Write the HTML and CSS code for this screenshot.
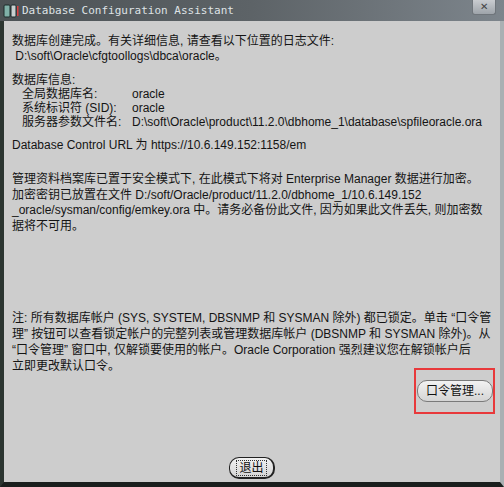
FILE: index.html
```html
<!DOCTYPE html>
<html>
<head>
    <title>Database Configuration Assistant</title>
    <link rel="stylesheet" href="styles.css">
</head>
<body>
    <div class="window">
        <div class="title-bar">
            <span class="app-icon">
                <svg width="16" height="16" viewBox="0 0 16 16">
                    <rect x="1" y="2" width="6" height="12" rx="1" fill="#7fb0a8" stroke="#1d2b2a"/>
                    <rect x="8" y="2" width="5" height="12" rx="1" fill="#c8d0d0" stroke="#1d2b2a"/>
                    <rect x="14" y="3" width="1.5" height="10" fill="#d94040"/>
                </svg>
            </span>
            <span class="title">Database Configuration Assistant</span>
            <span class="close">&#x2715;</span>
        </div>
        <div class="content">
            <div class="block block-a">
                <div>数据库创建完成。有关详细信息, 请查看以下位置的日志文件:</div>
                <div>&nbsp;D:\soft\Oracle\cfgtoollogs\dbca\oracle。</div>
            </div>
            <div class="block block-b">
                <div>数据库信息:</div>
                <div class="info-row"><span class="label">全局数据库名:</span><span>oracle</span></div>
                <div class="info-row"><span class="label">系统标识符 (SID):</span><span>oracle</span></div>
                <div class="info-row"><span class="label">服务器参数文件名:</span><span>D:\soft\Oracle\product\11.2.0\dbhome_1\database\spfileoracle.ora</span></div>
            </div>
            <div class="block block-c">
                <div>Database Control URL 为 https://10.6.149.152:1158/em</div>
            </div>
            <div class="block block-d">
                <div>管理资料档案库已置于安全模式下, 在此模式下将对 Enterprise Manager 数据进行加密。</div>
                <div>加密密钥已放置在文件 D:/soft/Oracle/product/11.2.0/dbhome_1/10.6.149.152</div>
                <div>_oracle/sysman/config/emkey.ora 中。请务必备份此文件, 因为如果此文件丢失, 则加密数</div>
                <div>据将不可用。</div>
            </div>
            <div class="block block-e">
                <div>注: 所有数据库帐户 (SYS, SYSTEM, DBSNMP 和 SYSMAN 除外) 都已锁定。单击 “口令管</div>
                <div>理” 按钮可以查看锁定帐户的完整列表或管理数据库帐户 (DBSNMP 和 SYSMAN 除外)。从</div>
                <div>“口令管理” 窗口中, 仅解锁要使用的帐户。Oracle Corporation 强烈建议您在解锁帐户后</div>
                <div>立即更改默认口令。</div>
            </div>
            <div class="password-row">
                <div class="highlight">
                    <div class="btn">口令管理...</div>
                </div>
            </div>
            <div class="exit-row">
                <div class="btn btn-exit"><span class="focus">退出</span></div>
            </div>
        </div>
    </div>
</body>
</html>
```

FILE: styles.css
```css
body {
    margin: 0;
    background: #1e2a22;
    font-family: "Liberation Sans", "Noto Sans CJK SC", sans-serif;
    font-size: 12px;
    color: #141414;
}

.window {
    width: 504px;
    height: 487px;
    display: flex;
    flex-direction: column;
}

.title-bar {
    height: 21px;
    display: flex;
    align-items: center;
    background: linear-gradient(to right, #4c5255, #5d6367 50%, #7d858c);
    position: relative;
}

.app-icon {
    width: 16px;
    height: 16px;
    margin-left: 3px;
    margin-right: 3px;
}

.title {
    font-family: "DejaVu Sans Mono", monospace;
    font-size: 11px;
    color: #dfe3e6;
}

.close {
    position: absolute;
    right: 8px;
    top: 0;
    width: 22px;
    height: 14px;
    font-size: 10px;
    line-height: 14px;
    text-align: center;
    color: #444;
    background: linear-gradient(#c9ccd0, #9ea4aa);
    border: 1px solid #6f757b;
    border-top: none;
    border-radius: 0 0 3px 3px;
}

.content {
    flex: 1;
    background: #cdcdcd;
    border-left: 4px solid #2b3530;
    border-right: 4px solid #aab0b3;
    border-bottom: 5px solid #1a1f1d;
    padding: 13px 0 0 8px;
    display: flex;
    flex-direction: column;
}

.block {
    line-height: 15px;
}

.block-b {
    margin-top: 9px;
    line-height: 14px;
}

.info-row {
    display: flex;
    padding-left: 10px;
}

.label {
    width: 110px;
}

.info-row span:last-child {
    white-space: nowrap;
}

.block-c {
    margin-top: 9px;
}

.block-d {
    margin-top: 19px;
    line-height: 15.5px;
}

.block-e {
    margin-top: 76px;
    line-height: 16px;
}

.password-row {
    display: flex;
    justify-content: flex-end;
    padding-right: 5px;
    margin-top: -6px;
}

.highlight {
    border: 2px solid #e8393b;
    padding: 10px 0 10px 1px;
}

.btn {
    border: 1px solid #7a7a7a;
    border-radius: 10px;
    background: linear-gradient(#f2f2f2, #d4d4d4);
    padding: 3px 8px 3px 8px;
    line-height: 14px;
    color: #111;
}

.exit-row {
    display: flex;
    justify-content: center;
    margin-top: 43px;
    padding-right: 8px;
}

.btn-exit {
    border-color: #222;
    border-width: 1px 2px 2px 1px;
    padding: 3px 6px 2px 6px;
}

.focus {
    border: 1px dotted #333;
    padding: 0 2px;
}
```
